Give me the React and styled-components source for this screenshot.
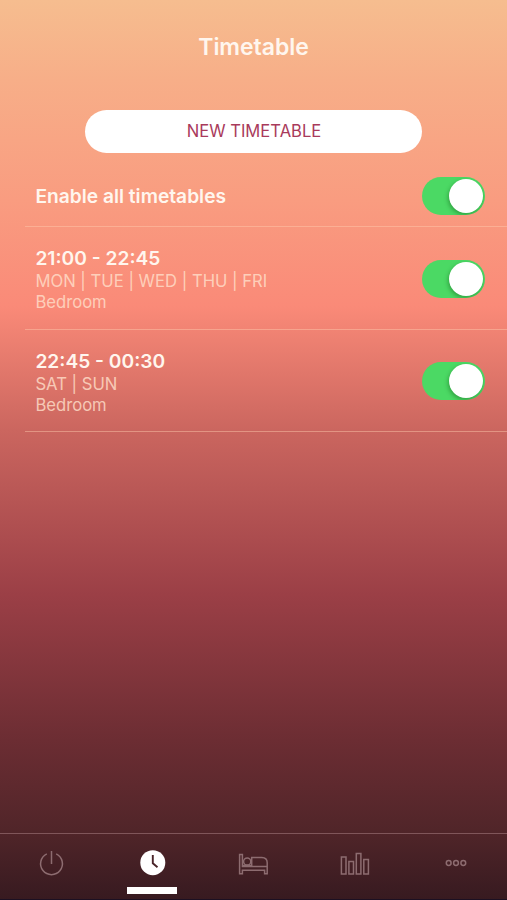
import React from "react";
import styled, { createGlobalStyle } from "styled-components";

const GlobalStyle = createGlobalStyle`
  *, *::before, *::after { box-sizing: border-box; }
  body { margin: 0; }
`;

const Screen = styled.div`
  display: flex;
  flex-direction: column;
  height: 900px;
  overflow: hidden;
  color: #fff6ee;
  font-family: Inter, "Liberation Sans", sans-serif;
  background: linear-gradient(#f6bd8f 0, #f7ae88 80px, #f99c80 200px, #fa8a78 306px, #cb665f 430px, #9b3f46 595px, #6c2d33 740px, #502529 832px, #371a20 900px);
`;

const Header = styled.header`
  display: flex;
  justify-content: center;
  padding-top: 32px;
  height: 110px;
`;

const Title = styled.h1`
  margin: 0;
  font-size: 23px;
  line-height: 30px;
  font-weight: 600;
  letter-spacing: -0.05px;
`;

const NewButton = styled.button`
  align-self: center;
  width: 337px;
  height: 43px;
  padding: 0 0 0 1px;
  border: 0;
  border-radius: 22px;
  background: #fff;
  color: #a93a5b;
  font: 400 16.6px/43px Inter, "Liberation Sans", sans-serif;
`;

const List = styled.main`
  flex: 1;
  padding-left: 25px;
`;

const Row = styled.section`
  display: flex;
  align-items: center;
  justify-content: space-between;
  height: ${(p) => p.$height}px;
  padding: ${(p) => p.$top || 0}px 22px 0 10.4px;
  border-bottom: 1px solid rgba(255, 205, 175, 0.45);
`;

const RowText = styled.div`
  padding-top: ${(p) => p.$top}px;
`;

const RowTitle = styled.div`
  font-size: 19.2px;
  line-height: 24px;
  font-weight: 600;
`;

const Detail = styled.div`
  font-size: 16.65px;
  line-height: 21px;
  color: rgba(255, 225, 205, 0.8);
`;

const Days = styled(Detail)`
  margin-top: 1px;
`;

const Track = styled.button`
  display: flex;
  justify-content: flex-end;
  width: 63px;
  height: 38px;
  padding: 2px;
  border: 0;
  border-radius: 19px;
  overflow: hidden;
  background: #4bd964;
`;

const Knob = styled.span`
  width: 34px;
  height: 34px;
  border-radius: 50%;
  background: #fff;
  box-shadow: -1px 2px 4px rgba(0, 60, 0, 0.35);
`;

const TabBar = styled.nav`
  display: grid;
  grid-template-columns: repeat(5, 1fr);
  height: 67px;
  border-top: 1px solid #80565a;
  border-bottom: 1px solid #1c1022;
`;

const Tab = styled.a`
  display: flex;
  flex-direction: column;
  align-items: center;
  justify-content: space-between;
  padding: 13px 0 5px;
  color: ${(p) => (p.$active ? "#fff" : "#8d6c70")};
  svg { display: block; }
`;

const Indicator = styled.span`
  width: 50px;
  height: 7px;
  background: #fff;
`;

const Icon = ({ children }) => (
  <svg width="34" height="32" viewBox="0 0 34 32" fill="none" stroke="currentColor" strokeWidth="1.5">
    {children}
  </svg>
);

const Toggle = () => (
  <Track role="switch" aria-checked="true"><Knob /></Track>
);

const Entry = ({ time, days, room, height, top, textTop }) => (
  <Row $height={height} $top={top}>
    <RowText $top={textTop}>
      <RowTitle>{time}</RowTitle>
      <Days>{days}</Days>
      <Detail>{room}</Detail>
    </RowText>
    <Toggle />
  </Row>
);

export default function App() {
  return (
    <>
      <GlobalStyle />
      <Screen>
        <Header><Title>Timetable</Title></Header>
        <NewButton>NEW TIMETABLE</NewButton>
        <List>
          <Row $height={74} $top={13}>
            <RowTitle>Enable all timetables</RowTitle>
            <Toggle />
          </Row>
          <Entry time="21:00 - 22:45" days="MON | TUE | WED | THU | FRI" room="Bedroom" height={103} top={2} textTop={1} />
          <Entry time="22:45 - 00:30" days="SAT | SUN" room="Bedroom" height={102} top={1} textTop={3} />
        </List>
        <TabBar>
          <Tab>
            <Icon>
              <path d="M12.8 6.9a10.9 10.9 0 1 0 9.4 0M17.5 4v13" />
            </Icon>
          </Tab>
          <Tab $active>
            <Icon>
              <circle cx="17.8" cy="15.7" r="12.5" fill="currentColor" stroke="none" />
              <path d="M17.8 8v8.2l4.7 4" stroke="#4a2429" strokeWidth="1.9" />
            </Icon>
            <Indicator />
          </Tab>
          <Tab>
            <Icon>
              <path d="M3.6 7.6h2.8v12h24.8v7.2h-2.6v-3.6H6.4v3.6H3.6zM15.7 19.6v-9.2h10.1q5.4 0 5.4 5.4v5M6.4 18.6h9.3" />
              <circle cx="11.2" cy="14.5" r="3.6" />
            </Icon>
          </Tab>
          <Tab>
            <Icon>
              <path d="M3.4 10.1h4.6v17h-4.6zM10.9 14.6h4.6v12.5h-4.6zM18.3 6.4h4.6v20.7h-4.6zM25.8 12.4h4.6v14.7h-4.6z" />
            </Icon>
          </Tab>
          <Tab>
            <Icon>
              <circle cx="9.7" cy="16" r="2.4" />
              <circle cx="17" cy="16" r="2.4" />
              <circle cx="24.3" cy="16" r="2.4" />
            </Icon>
          </Tab>
        </TabBar>
      </Screen>
    </>
  );
}
